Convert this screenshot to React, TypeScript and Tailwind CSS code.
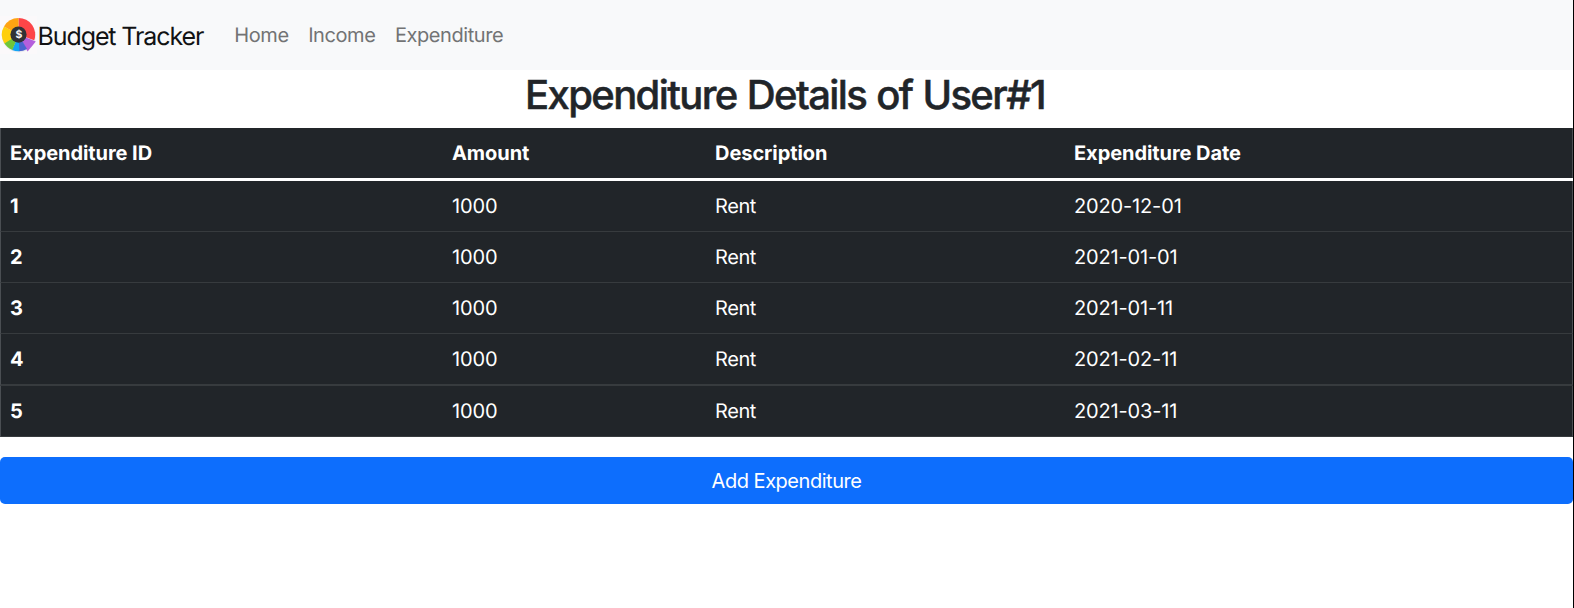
const rows = [
  { id: 1, amount: 1000, description: "Rent", date: "2020-12-01" },
  { id: 2, amount: 1000, description: "Rent", date: "2021-01-01" },
  { id: 3, amount: 1000, description: "Rent", date: "2021-01-11" },
  { id: 4, amount: 1000, description: "Rent", date: "2021-02-11" },
  { id: 5, amount: 1000, description: "Rent", date: "2021-03-11" },
];

const columns = "grid grid-cols-[441px_263px_359px_1fr] items-center border-x border-[#4a4e52]";

function Logo() {
  return (
    <svg className="h-[38px] w-[38px] shrink-0" viewBox="0 0 38 38" aria-hidden="true">
      <rect width="37" height="38" fill="#fbf9fa" />
      <circle cx="18.8" cy="19.4" r="17" fill="#dde0e6" opacity="0.6" />
      <path d="M18.5 18.6V2A16.6 16.6 0 0 1 34.2 24.2Z" fill="#fd4548" />
      <path d="M18.5 18.6 35.8 25.4 27.6 35.4Z" fill="#b45fdc" />
      <path d="M18.5 18.6 27 33A16.6 16.6 0 0 1 18.8 35.2Z" fill="#4a63cf" />
      <path d="M18.6 18.6 19.4 35.2A16.6 16.6 0 0 1 12 33.9Z" fill="#12a5f5" />
      <path d="M18.5 18.6 12.4 34.1A16.6 16.6 0 0 1 4.1 26.8Z" fill="#6fc63a" />
      <path d="M18.5 18.6 4.4 27.4A16.6 16.6 0 0 1 4 10.5Z" fill="#ffcf0c" />
      <path d="M18.5 18.6 4 10.5A16.6 16.6 0 0 1 18.5 2Z" fill="#ffa412" />
      <circle cx="18.5" cy="18.6" r="8.1" fill="#303236" />
      <text x="18.5" y="22.4" textAnchor="middle" fontSize="10.5" fontWeight="700" fill="#f4f4f4">$</text>
    </svg>
  );
}

export default function App() {
  return (
    <div className="h-[608px] overflow-hidden border-r border-black bg-white font-['Inter',sans-serif] text-[20px] leading-[30px] text-[#212529] [text-rendering:geometricPrecision]">
      <nav className="flex h-[70px] items-center bg-[#f8f9fa]">
        <a className="flex items-center text-[25px] tracking-[-1.1px] text-[#111213]">
          <Logo />
          <span className="-ml-[0.5px] pt-[4px]">Budget Tracker</span>
        </a>
        <div className="ml-[31px] flex gap-[19.5px] tracking-[-0.42px] text-[#727374]">
          <a>Home</a>
          <a>Income</a>
          <a>Expenditure</a>
        </div>
      </nav>

      <h1 className="h-[58px] pt-[1px] pr-[3px] text-center text-[40px] leading-[48px] font-medium tracking-[-1.6px] [-webkit-text-stroke:0.5px_#212529] [word-spacing:1px]">
        Expenditure Details of User#1
      </h1>

      <div className="text-white">
        <div className={`${columns} h-[50px] bg-[#212529] font-bold tracking-[-0.06px]`}>
          <span className="pl-[9px]">Expenditure ID</span>
          <span className="pl-[10px]">Amount</span>
          <span className="pl-[10px]">Description</span>
          <span className="pl-[10px]">Expenditure Date</span>
        </div>
        <div className="mt-[3px] tracking-[-0.15px]">
          {rows.map((row) => (
            <div
              key={row.id}
              className={`${columns} bg-[#212529] border-b border-b-[#373b3e] ${row.id === 4 ? "h-[52px] border-b-2" : "h-[51px]"}`}
            >
              <span className="pl-[9px] font-bold">{row.id}</span>
              <span className="pl-[10px]">{row.amount}</span>
              <span className="pl-[10px] tracking-[-0.4px]">{row.description}</span>
              <span className="pl-[10px]">{row.date}</span>
            </div>
          ))}
        </div>
      </div>

      <button className="mt-5 block h-[47px] w-full rounded-[5px] bg-[#0d6efd] tracking-[-0.47px] text-white">Add Expenditure</button>
    </div>
  );
}
